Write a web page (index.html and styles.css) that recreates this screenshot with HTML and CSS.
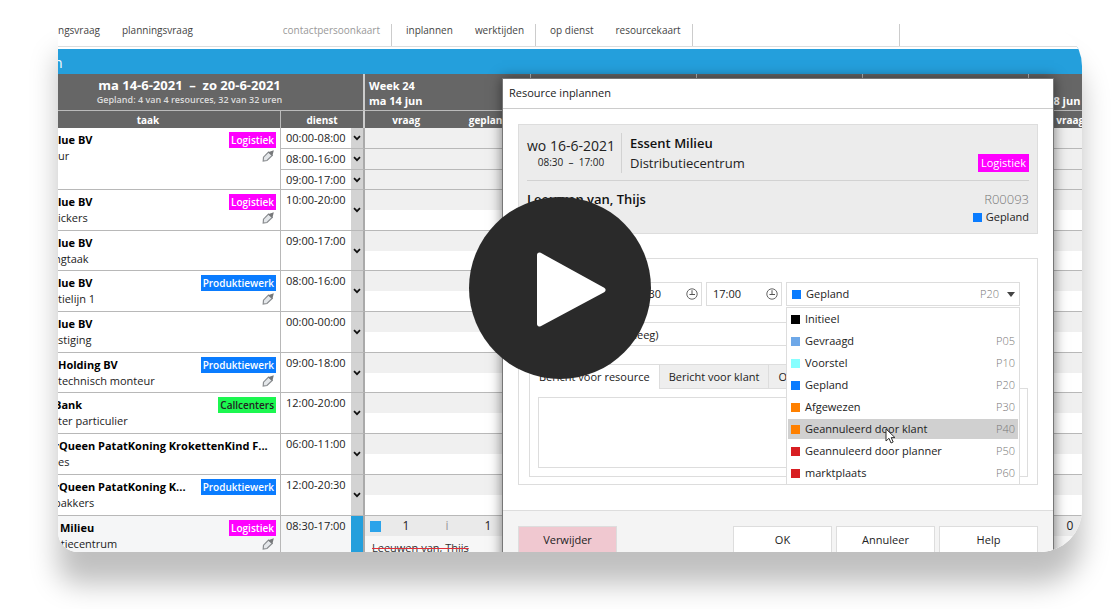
FILE: index.html
```html
<!DOCTYPE html>
<html lang="nl">
<head>
<meta charset="utf-8">
<title>Resource inplannen</title>
<link rel="stylesheet" href="styles.css">
</head>
<body>
<svg class="defs" aria-hidden="true">
  <symbol id="pen" viewBox="0 0 12 12"><path d="M1.200 11 1.500 7.200 6.500 2 10.200 5.400 5 10.500z" fill="#e4e7ea" stroke="#8a8d90" stroke-width="1.200"/><path d="M6 2.200 11.800.3 10.400 6z" fill="#77797b"/></symbol>
  <symbol id="chev" viewBox="0 0 8 6"><path d="M1 1.2 4 4.2 7 1.2" fill="none" stroke="#111" stroke-width="1.7"/></symbol>
  <symbol id="clock" viewBox="0 0 12 12"><circle cx="6" cy="6" r="5.2" fill="none" stroke="#666" stroke-width="1"/><path d="M6 2.2V6.5M3.5 6.5H9" fill="none" stroke="#555" stroke-width="1"/></symbol>
</svg>
<main class="frame">
  <nav class="menu">
    <div class="menu-group first"><button>ngsvraag</button><button>planningsvraag</button><button class="push" disabled>contactpersoonkaart</button></div>
    <div class="menu-group"><button>inplannen</button><button>werktijden</button></div>
    <div class="menu-group"><button>op dienst</button><button>resourcekaart</button></div>
    <div class="menu-group rest"></div>
  </nav>
  <div class="bar"><span class="cut">n</span></div>

  <table class="plan">
    <colgroup><col class="c-task"><col class="c-time"><col class="c-arrow"><col class="c-day"><col class="c-day"><col class="c-day"><col class="c-day"><col class="c-day"></colgroup>
    <thead>
      <tr class="h1">
        <th colspan="3" class="period"><div class="range">ma 14-6-2021 &nbsp;–&nbsp; zo 20-6-2021</div><div class="sum">Gepland: 4 van 4 resources, 32 van 32 uren</div></th>
        <th class="day">Week 24<br>ma 14 jun</th><th class="day"></th><th class="day"></th><th class="day"></th><th class="day"><br>vr 18 jun</th>
      </tr>
      <tr class="h2">
        <th class="first">taak</th><th colspan="2" class="last">dienst</th>
        <th><div class="pair"><span>vraag</span><span>gepland</span></div></th><th></th><th></th><th></th><th><div class="pair"><span>vraag</span><span>gepland</span></div></th>
      </tr>
    </thead>
    <tbody>
      <tr class="sub"><td class="task" rowspan="3"><div class="line"><b>lue BV</b><span class="tag pink">Logistiek</span></div><div class="line"><span>ur</span><svg class="pen"><use href="#pen"/></svg></div></td><td class="time">00:00-08:00</td><td class="arrow"><svg><use href="#chev"/></svg></td><td></td><td></td><td></td><td></td><td></td></tr>
      <tr class="sub"><td class="time">08:00-16:00</td><td class="arrow"><svg><use href="#chev"/></svg></td><td></td><td></td><td></td><td></td><td></td></tr>
      <tr class="sub"><td class="time">09:00-17:00</td><td class="arrow"><svg><use href="#chev"/></svg></td><td></td><td></td><td></td><td></td><td></td></tr>
    </tbody>
    <tbody class="rows">
      <tr><td class="task"><div class="line"><b>lue BV</b><span class="tag pink">Logistiek</span></div><div class="line"><span>ickers</span><svg class="pen"><use href="#pen"/></svg></div></td><td class="time">10:00-20:00</td><td class="arrow"><svg><use href="#chev"/></svg></td><td></td><td></td><td></td><td></td><td></td></tr>
      <tr><td class="task"><div class="line"><b>lue BV</b></div><div class="line"><span class="cut">ngtaak</span></div></td><td class="time">09:00-17:00</td><td class="arrow"><svg><use href="#chev"/></svg></td><td></td><td></td><td></td><td></td><td></td></tr>
      <tr><td class="task"><div class="line"><b>lue BV</b><span class="tag blue">Produktiewerk</span></div><div class="line"><span>tielijn 1</span><svg class="pen"><use href="#pen"/></svg></div></td><td class="time">08:00-16:00</td><td class="arrow"><svg><use href="#chev"/></svg></td><td></td><td></td><td></td><td></td><td></td></tr>
      <tr><td class="task"><div class="line"><b>lue BV</b></div><div class="line"><span>stiging</span></div></td><td class="time">00:00-00:00</td><td class="arrow"><svg><use href="#chev"/></svg></td><td></td><td></td><td></td><td></td><td></td></tr>
      <tr><td class="task"><div class="line"><b>Holding BV</b><span class="tag blue">Produktiewerk</span></div><div class="line"><span>technisch monteur</span><svg class="pen"><use href="#pen"/></svg></div></td><td class="time">09:00-18:00</td><td class="arrow"><svg><use href="#chev"/></svg></td><td></td><td></td><td></td><td></td><td></td></tr>
      <tr><td class="task"><div class="line"><b class="cut">Bank</b><span class="tag green">Callcenters</span></div><div class="line"><span>ter particulier</span></div></td><td class="time">12:00-20:00</td><td class="arrow"><svg><use href="#chev"/></svg></td><td></td><td></td><td></td><td></td><td></td></tr>
      <tr><td class="task"><div class="line"><b class="cut">rQueen PatatKoning KrokettenKind F...</b></div><div class="line"><span>es</span></div></td><td class="time">06:00-11:00</td><td class="arrow"><svg><use href="#chev"/></svg></td><td></td><td></td><td></td><td></td><td></td></tr>
      <tr><td class="task"><div class="line"><b class="cut">rQueen PatatKoning K...</b><span class="tag blue">Produktiewerk</span></div><div class="line"><span class="cut">bakkers</span></div></td><td class="time">12:00-20:30</td><td class="arrow"><svg><use href="#chev"/></svg></td><td></td><td></td><td></td><td></td><td></td></tr>
      <tr class="current"><td class="task"><div class="line"><b>Milieu</b><span class="tag pink">Logistiek</span></div><div class="line"><span class="cut">utiecentrum</span><svg class="pen"><use href="#pen"/></svg></div></td><td class="time">08:30-17:00</td><td class="arrow"></td>
        <td><div class="counts"><i class="sq"></i><span>1</span><span class="info">i</span><span>1</span></div><s>Leeuwen van, Thijs</s></td><td></td><td></td><td></td><td><div class="counts"><i></i><span>0</span></div></td></tr>
    </tbody>
  </table>

  <section class="dialog" role="dialog" aria-label="Resource inplannen">
    <h1>Resource inplannen</h1>
    <div class="content">
      <div class="card">
        <div class="card-top">
          <div class="when"><div class="date">wo 16-6-2021</div><div class="hours">08:30 &nbsp;–&nbsp; 17:00</div></div>
          <div class="where"><b>Essent Milieu</b><span>Distributiecentrum</span></div>
          <span class="tag pink light">Logistiek</span>
        </div>
        <div class="card-bottom">
          <b>Leeuwen van, Thijs</b>
          <div class="ref"><span class="code">R00093</span><span class="state"><i class="sw gepland"></i>Gepland</span></div>
        </div>
      </div>
      <form class="fields">
        <div class="row">
          <label class="field time-in"><input aria-label="Begintijd" value="08:30"><svg><use href="#clock"/></svg></label>
          <label class="field time-in"><input aria-label="Eindtijd" value="17:00"><svg><use href="#clock"/></svg></label>
          <div class="combo">
            <div class="field status"><i class="sw gepland"></i><select aria-label="Status"><option>Gepland</option></select><span class="code">P20</span><svg viewBox="0 0 8 5"><path d="M0 0H8L4 5z" fill="#444"/></svg></div>
            <ul class="options" role="listbox" aria-label="Status">
              <li role="option"><i class="sw black"></i>Initieel</li>
              <li role="option"><i class="sw sky"></i>Gevraagd<span>P05</span></li>
              <li role="option"><i class="sw aqua"></i>Voorstel<span>P10</span></li>
              <li role="option"><i class="sw gepland"></i>Gepland<span>P20</span></li>
              <li role="option"><i class="sw orange"></i>Afgewezen<span>P30</span></li>
              <li role="option" aria-selected="true"><i class="sw orange"></i>Geannuleerd door klant<span>P40</span></li>
              <li role="option"><i class="sw red"></i>Geannuleerd door planner<span>P50</span></li>
              <li role="option"><i class="sw red"></i>marktplaats<span>P60</span></li>
            </ul>
            <svg class="cursor" viewBox="0 0 11 16"><path d="M1 1V13L4 10.3 6 15 8.2 14 6.2 9.6H10z" fill="#fff" stroke="#333" stroke-width="1"/></svg>
          </div>
        </div>
        <div class="row second"><input class="field reason" aria-label="Reden" value="(leeg)"></div>
        <div class="tabs" role="tablist"><button type="button" role="tab" aria-selected="true">Bericht voor resource</button><button type="button" role="tab">Bericht voor klant</button><button type="button" role="tab">O</button></div>
        <div class="panel"><textarea aria-label="Bericht voor resource"></textarea></div>
      </form>
    </div>
    <footer><button class="danger">Verwijder</button><button>OK</button><button>Annuleer</button><button>Help</button></footer>
  </section>
</main>
<button class="play" aria-label="Video afspelen"><svg viewBox="0 0 182 182"><path d="M70.500 58 134 93 70.500 127z" fill="#fff" stroke="#fff" stroke-width="5" stroke-linejoin="round"/></svg></button>
</body>
</html>
```
FILE: styles.css
```css
* { box-sizing: border-box; }
body { margin: 0; min-height: 100vh; padding: 24px 38px 57px 58px; background: #fff; color: #222; font: 11px/16px "Open Sans", "Noto Sans", sans-serif; position: relative; overflow: hidden; }
button, input, select, textarea { font: inherit; color: inherit; border: 0; margin: 0; padding: 0; background: none; }
.defs { display: none; }
svg { display: block; flex: none; }

.frame { position: relative; height: calc(100vh - 81px); overflow: hidden; border-radius: 0 42px 42px 20px; background: #fff; box-shadow: 0 32px 28px rgba(0, 0, 0, .25); }
.cut { margin-left: -4px; }

.menu { display: flex; height: 23px; border-bottom: 1px solid #ddd; color: #444; font-size: 10px; }
.menu-group { display: flex; align-items: flex-start; gap: 22px; padding: 0 11px 0 14px; border-right: 1px solid #ccc; line-height: 12px; }
.menu-group.first { width: 334px; padding-left: 0; }
.menu-group.rest { width: 207px; padding: 0; }
.menu button { white-space: nowrap; }
.push { margin-left: auto; }
.menu button:disabled { color: #999; }
.bar { height: 27px; border-top: 2px solid #fff; background: #249fdc; color: #fff; font-size: 14px; line-height: 27px; }

.plan { table-layout: fixed; width: 1137px; border-collapse: separate; border-spacing: 0; }
.c-task { width: 223px; }
.c-time { width: 70px; }
.c-arrow { width: 14px; }
.c-day { width: 166px; }
th { padding: 0; background: #666; color: #fff; font-weight: 600; border-right: 1px solid #bbb; border-bottom: 1px solid #bbb; }
.h1 { height: 37px; }
.h2 { height: 17px; font-size: 10px; line-height: 16px; }
.h2 th { border-bottom: 0; font-weight: 700; }
.period, .h2 .last { border-right: 2px solid #ccc; }
.period { padding-right: 42px; }
.h2 .first { padding-right: 42px; }
.range { font-size: 13px; font-weight: 700; line-height: 16px; }
.sum { font-size: 9px; line-height: 14px; color: #ddd; }
.day { padding: 4px 0 0 4px; text-align: left; vertical-align: top; font-weight: 700; line-height: 15px; }
.pair { display: grid; grid-template-columns: 1fr 1fr; line-height: 14px; }

td { padding: 0; border-bottom: 1px solid #b8b8b8; border-right: 1px solid #eee; background: #f0f0f0; vertical-align: top; }
.sub { height: 21px; }
.sub:nth-child(3) { height: 20px; }
.rows tr { height: 41px; }
.rows tr:nth-child(2), .rows tr:nth-child(5) { height: 40px; }
.rows td { background: linear-gradient(#f0f0f0 20px, #fff 20px); }
.plan .task, .plan .time { background: #fff; border-right: 1px solid #b8b8b8; }
.plan .time { padding-left: 5px; line-height: 20px; border-right: 0; white-space: nowrap; }
.sub .time { line-height: 19px; }
.plan .arrow { background: #d3d3d3; border-right: 2px solid #aaa; vertical-align: middle; }
.arrow svg { width: 8px; height: 6px; margin: 0 auto; }
.task { padding: 4px 4px 0 0; }
.line { display: flex; justify-content: space-between; align-items: center; height: 16px; white-space: nowrap; }
.line b { color: #000; }
b { font-weight: 700; }
.tag { height: 16px; padding: 0 2px; color: #fff; font-size: 10px; font-weight: 600; line-height: 16px; }
.tag.light { font-size: 11px; font-weight: 400; padding: 1px 3px; height: 18px; }
.pink { background: #f0f; }
.blue { background: #0a7cff; }
.green { background: #1cf750; }
.line .green { color: #222; }
.pen { width: 12px; height: 12px; margin-right: 2px; }
.plan .current td { background: linear-gradient(#eaeaea 20px, #f7f7f7 20px); }
.plan .current .task, .plan .current .time { background: #f5f6f7; }
.plan .current .arrow { background: #249fdc; }
.current b { margin-left: 2px; }
.counts { display: grid; grid-template-columns: 20px 42px 40px 42px; height: 20px; align-items: center; text-align: center; font-size: 12px; }
.sq { width: 11px; height: 11px; margin-left: 5px; background: #2ba3ea; }
.info { color: #999; }
s { display: block; padding: 4px 0 0 7px; color: #333; text-decoration: line-through 1px #e0303a; }

.dialog { position: absolute; top: 54px; left: 444px; right: 28px; background: #fff; border: 1px solid #777; box-shadow: 0 0 12px rgba(0, 0, 0, .5); }
h1 { margin: 0; padding: 6px 6px 7px; border-bottom: 1px solid #ccc; font-size: 11px; font-weight: 400; line-height: 16px; }
.content { padding: 15px 15px 25px; }
.card { padding: 8px; border: 1px solid #ddd; background: #ececec; }
.card-top { display: flex; align-items: flex-start; padding-bottom: 7px; border-bottom: 1px solid #d2d2d2; }
.when { height: 40px; padding: 5px 6px 0 0; border-right: 1px solid #d2d2d2; text-align: center; }
.date { font-size: 14px; line-height: 16px; }
.hours { font-size: 10px; }
.where { display: flex; flex-direction: column; padding-left: 8px; font-size: 13px; line-height: 20px; }
.where b, .card-bottom b { font-weight: 600; color: #111; }
.card-top .tag { margin: 21px 0 0 auto; }
.card-bottom { display: flex; justify-content: space-between; height: 44px; padding-top: 9px; font-size: 13px; line-height: 18px; }
.ref { display: flex; flex-direction: column; align-items: flex-end; }
.code { color: #777; font-weight: 300; }
.state { display: flex; align-items: center; gap: 4px; font-size: 11px; }
.sw { flex: none; width: 9px; height: 9px; }
.gepland { background: #0a7cff; }
.black { background: #000; }
.sky { background: #6ea8e8; }
.aqua { background: #86ffff; }
.orange { background: #ff8000; }
.red { background: #d81e22; }

.fields { margin-top: 24px; padding: 23px 9px 7px 10px; border: 1px solid #ddd; }
.row { display: flex; justify-content: flex-end; gap: 4px; padding-right: 8px; }
.second { margin: 16px 0 18px; }
.field { display: flex; align-items: center; height: 24px; border: 1px solid #ddd; background: #fff; }
.time-in { width: 76px; padding: 0 3px 0 6px; }
.time-in input { width: 52px; }
.time-in svg { width: 12px; height: 12px; margin-left: auto; }
.reason { width: 394px; padding-left: 4px; }
.combo { position: relative; width: 234px; }
.status { padding: 0 4px 0 5px; }
.status select { flex: 1; margin-left: 5px; appearance: none; }
.status svg { width: 8px; height: 5px; margin-left: 8px; }
.options { position: absolute; z-index: 1; top: 25px; left: 0; right: 0; margin: 0; padding: 1px; border: 1px solid #ddd; background: #fff; list-style: none; }
.options li { display: flex; align-items: center; gap: 5px; height: 20px; margin-bottom: 2px; padding: 0 3px; }
.options li:last-child { margin-bottom: 0; }
.options span { margin-left: auto; color: #777; font-weight: 300; }
.options [aria-selected] { background: #d0d0d0; }
.cursor { position: absolute; z-index: 2; top: 146px; left: 99px; width: 11px; height: 16px; }
.tabs { display: flex; }
.tabs button { height: 24px; padding: 0 9px; border: 1px solid #ddd; border-left: 0; border-bottom: 0; background: #eee; white-space: nowrap; }
.tabs [aria-selected] { position: relative; z-index: 1; height: 25px; margin-bottom: -1px; border: 1px solid #ddd; border-bottom: 0; background: #fff; }
.panel { padding: 8px; border: 1px solid #ddd; }
textarea { display: block; width: 100%; height: 71px; border: 1px solid #ddd; resize: none; }
footer { display: flex; gap: 4px; padding: 15px 15px 16px; border-top: 1px solid #ddd; background: #f4f4f4; }
footer button { width: 99px; height: 28px; border: 1px solid #ddd; background: #fff; }
footer .danger { margin-right: auto; background: #f0c8d0; }

.play { position: absolute; z-index: 3; top: 197px; left: calc(50% - 91px); width: 182px; height: 182px; border-radius: 50%; background: #2a2a2a; }
.play svg { width: 100%; height: 100%; }
```
